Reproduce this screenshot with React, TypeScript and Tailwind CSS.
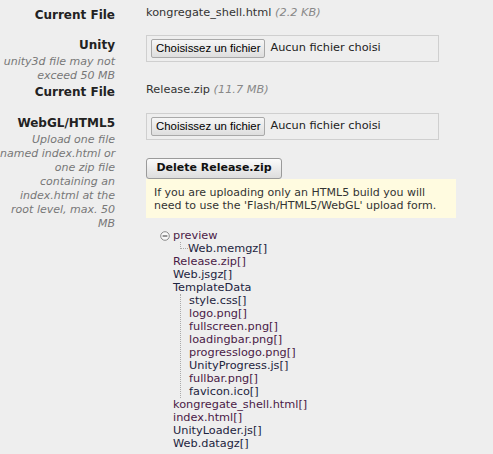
const verdana = { fontFamily: '"DejaVu Sans", Verdana, sans-serif' };

const tree: { name: string; level: number; purple?: boolean }[] = [
    { name: "Web.memgz[]", level: 2 },
    { name: "Release.zip[]", level: 1, purple: true },
    { name: "Web.jsgz[]", level: 1 },
    { name: "TemplateData", level: 1 },
];

const templateFiles: { name: string; purple?: boolean }[] = [
    { name: "style.css[]" },
    { name: "logo.png[]", purple: true },
    { name: "fullscreen.png[]", purple: true },
    { name: "loadingbar.png[]", purple: true },
    { name: "progresslogo.png[]", purple: true },
    { name: "UnityProgress.js[]" },
    { name: "fullbar.png[]", purple: true },
    { name: "favicon.ico[]" },
];

const rootFiles: { name: string; purple?: boolean }[] = [
    { name: "kongregate_shell.html[]", purple: true },
    { name: "index.html[]", purple: true },
    { name: "UnityLoader.js[]" },
    { name: "Web.datagz[]" },
];

const webglHelp = [
    "Upload one file",
    "named index.html or",
    "one zip file",
    "containing an",
    "index.html at the",
    "root level, max. 50",
    "MB",
];

// fake file input, the real one would show english text
function FileBox() {
    return (
        <div className="flex items-center w-[293px] h-[27px] border border-[#cfcfcf] pl-[4px]">
            <div
                className="h-[19px] px-[4px] flex items-center border border-[#a9a9a9] rounded-[2px] bg-gradient-to-b from-[#f6f6f6] to-[#dedede] text-[11.4px] text-black"
                style={{ fontFamily: '"Liberation Sans", Arial, sans-serif' }}
            >
                Choisissez un fichier
            </div>
            <span className="ml-[5px] text-[11.3px] text-[#222]">Aucun fichier choisi</span>
        </div>
    );
}

function Label({ text, pt }: { text: string; pt: string }) {
    return (
        <div className={`text-[12px] leading-[14px] font-bold text-[#222] ${pt}`}>{text}</div>
    );
}

const color = (purple?: boolean) => (purple ? "text-[#4a1a46]" : "text-[#1d2440]");

export default function App() {
    return (
        <div className="min-h-[454px] w-[493px] bg-[#eeeeee] pt-[6px]" style={verdana}>
            {/* current file */}
            <div className="flex">
                <div className="w-[115px] text-right">
                    <Label text="Current File" pt="pt-[2px]" />
                </div>
                <div className="ml-[31px] text-[11.3px] leading-[14px] text-[#333]">
                    kongregate_shell.html <i className="text-[#888]">(2.2 KB)</i>
                </div>
            </div>

            {/* unity */}
            <div className="flex mt-[13px]">
                <div className="w-[115px] text-right">
                    <Label text="Unity" pt="pt-[3px]" />
                    <div className="mt-[3px] text-[11px] leading-[14px] italic text-[#777] whitespace-nowrap">
                        unity3d file may not
                        <br />
                        exceed 50 MB
                    </div>
                </div>
                <div className="ml-[31px]">
                    <FileBox />
                </div>
            </div>

            {/* current file 2 */}
            <div className="flex">
                <div className="w-[115px] text-right">
                    <Label text="Current File" pt="pt-[2px]" />
                </div>
                <div className="ml-[31px] text-[11.3px] leading-[14px] text-[#333]">
                    Release.zip <i className="text-[#888]">(11.7 MB)</i>
                </div>
            </div>

            {/* webgl */}
            <div className="flex mt-[14px]">
                <div className="w-[115px] text-right">
                    <Label text="WebGL/HTML5" pt="pt-[3px]" />
                    <div className="mt-[3px] text-[11px] leading-[14px] italic text-[#777] whitespace-nowrap">
                        {webglHelp.map((l) => (
                            <div key={l}>{l}</div>
                        ))}
                    </div>
                </div>
                <div className="ml-[31px]">
                    <FileBox />
                    <button className="mt-[18px] h-[21px] w-[136px] border border-[#9a9a9a] rounded-[3px] bg-gradient-to-b from-[#fbfbfb] to-[#dddddd] text-[11px] font-bold text-[#111]">
                        Delete Release.zip
                    </button>
                    <div className="w-[310px] bg-[#fffbe0] pl-[8px] pt-[7px] pb-[6px] text-[11px] leading-[13px] text-[#333]">
                        If you are uploading only an HTML5 build you will need to use the 'Flash/HTML5/WebGL' upload form.
                    </div>

                    {/* file tree */}
                    <div className="mt-[11px] text-[11.3px] leading-[13px]">
                        <div className="flex items-center">
                            <svg width="10" height="10" viewBox="0 0 10 10" className="ml-[14px] mr-[3px]">
                                <circle cx="5" cy="5" r="4.3" fill="#f8f8f8" stroke="#8a8a8a" />
                                <line x1="2.6" y1="5" x2="7.4" y2="5" stroke="#333" />
                            </svg>
                            <span className={color(true)}>preview</span>
                        </div>
                        {tree.map((t) =>
                            t.level === 2 ? (
                                <div key={t.name} className="flex">
                                    <div className="ml-[34px] w-[8px] h-[7px] border-l border-b border-dotted border-[#aaa]" />
                                    <span className={color(t.purple)}>{t.name}</span>
                                </div>
                            ) : (
                                <div key={t.name} className={`pl-[27px] ${color(t.purple)}`}>{t.name}</div>
                            )
                        )}
                        <div className="ml-[34px] border-l border-dotted border-[#aaa] pl-[8px]">
                            {templateFiles.map((f) => (
                                <div key={f.name} className={color(f.purple)}>{f.name}</div>
                            ))}
                        </div>
                        {rootFiles.map((f) => (
                            <div key={f.name} className={`pl-[27px] ${color(f.purple)}`}>{f.name}</div>
                        ))}
                    </div>
                </div>
            </div>
        </div>
    );
}
